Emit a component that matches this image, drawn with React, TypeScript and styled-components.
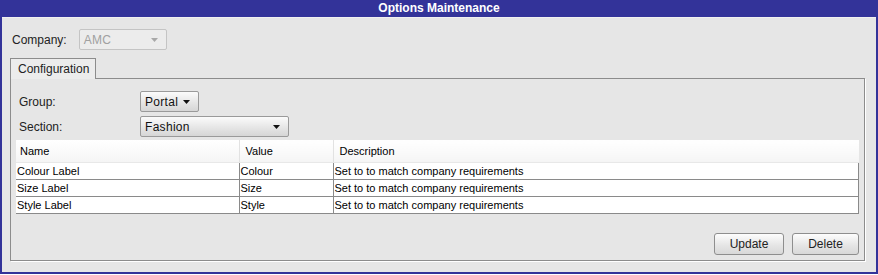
import React from 'react';
import styled, { createGlobalStyle } from 'styled-components';

const GlobalStyle = createGlobalStyle`
  body {
    margin: 0;
    background: #ffffff;
    font-family: 'Liberation Sans', Arial, sans-serif;
  }
`;

interface Row {
  name: string;
  value: string;
  description: string;
}

const rows: Row[] = [
  { name: 'Colour Label', value: 'Colour', description: 'Set to to match company requirements' },
  { name: 'Size Label', value: 'Size', description: 'Set to to match company requirements' },
  { name: 'Style Label', value: 'Style', description: 'Set to to match company requirements' },
];

const Arrow = ({ disabled }: { disabled?: boolean }) => (
  <svg width="7" height="4" viewBox="0 0 7 4">
    <path d="M0 0 L7 0 L3.5 4 Z" fill={disabled ? '#a8a8a8' : '#111'} />
  </svg>
);

const App = () => {
  return (
    <>
      <GlobalStyle />
      <Window>
        <TitleBar>Options Maintenance</TitleBar>
        <Body>
          <CompanyRow>
            <Label>Company:</Label>
            <Select $width={88} $disabled>
              <span>AMC</span>
              <Arrow disabled />
            </Select>
          </CompanyRow>
          <TabStrip>
            <Tab>Configuration</Tab>
          </TabStrip>
          <Panel>
            <FieldRow>
              <FieldLabel>Group:</FieldLabel>
              <Select $width={59}>
                <span>Portal</span>
                <Arrow />
              </Select>
            </FieldRow>
            <FieldRow>
              <FieldLabel>Section:</FieldLabel>
              <Select $width={149}>
                <span>Fashion</span>
                <Arrow />
              </Select>
            </FieldRow>
            <Table>
              <thead>
                <tr>
                  <Th $width={223}>Name</Th>
                  <Th $width={94}>Value</Th>
                  <Th>Description</Th>
                </tr>
              </thead>
              <tbody>
                {rows.map((r) => (
                  <tr key={r.name}>
                    <Td>{r.name}</Td>
                    <Td>{r.value}</Td>
                    <Td>{r.description}</Td>
                  </tr>
                ))}
              </tbody>
            </Table>
            <Actions>
              <Button $width={70}>Update</Button>
              <Button $width={67}>Delete</Button>
            </Actions>
          </Panel>
        </Body>
      </Window>
    </>
  );
};

export default App;

const Window = styled.div`
  width: 878px;
  height: 274px;
  box-sizing: border-box;
  background: #e6e6e6;
  border: 2px solid #333399;
  border-top: none;
  display: flex;
  flex-direction: column;
`;

const TitleBar = styled.div`
  height: 17px;
  margin: 0 -2px;
  background: #333399;
  color: #ffffff;
  font-size: 12px;
  font-weight: bold;
  line-height: 17px;
  text-align: center;
`;

const Body = styled.div`
  flex: 1;
  display: flex;
  flex-direction: column;
  padding: 11px 11px 0 8px;
  border-top: 1px solid #f0f0f0;
`;

const CompanyRow = styled.div`
  display: flex;
  align-items: center;
  gap: 12px;
  padding-left: 2px;
`;

const Label = styled.span`
  font-size: 12px;
  color: #222;
`;

const Select = styled.div<{ $width: number; $disabled?: boolean }>`
  width: ${(p) => p.$width}px;
  height: 21px;
  box-sizing: border-box;
  display: flex;
  align-items: center;
  justify-content: space-between;
  padding: 0 8px 0 4px;
  border: 1px solid ${(p) => (p.$disabled ? '#c4c4c4' : '#9a9a9a')};
  border-radius: 2px;
  background: ${(p) =>
    p.$disabled ? '#ececec' : 'linear-gradient(#fbfbfb, #e4e4e4 60%, #d6d6d6)'};
  color: ${(p) => (p.$disabled ? '#a0a0a0' : '#111')};
  font-size: 12px;
  letter-spacing: 0.3px;
`;

const TabStrip = styled.div`
  display: flex;
  margin-top: 8px;
`;

const Tab = styled.div`
  height: 21px;
  box-sizing: border-box;
  padding: 3px 6px 0 7px;
  border: 1px solid #8c8c8c;
  border-bottom: none;
  background: #ececec;
  font-size: 12px;
  color: #222;
  margin-bottom: -1px;
  position: relative;
  z-index: 1;
`;

const Panel = styled.div`
  height: 183px;
  box-sizing: border-box;
  border: 1px solid #8c8c8c;
  box-shadow: 1px 1px 0 #ffffff;
  padding: 12px 4px 0 5px;
  display: flex;
  flex-direction: column;
`;

const FieldRow = styled.div`
  display: flex;
  align-items: center;
  height: 21px;
  margin-bottom: 4px;
`;

const FieldLabel = styled.span`
  width: 121px;
  padding-left: 3px;
  font-size: 12px;
  color: #222;
`;

const Table = styled.table`
  width: 843px;
  border-collapse: collapse;
  margin-top: -1px;
  font-size: 11px;
  color: #000;
`;

const Th = styled.th<{ $width?: number }>`
  width: ${(p) => (p.$width ? `${p.$width}px` : 'auto')};
  height: 22px;
  box-sizing: border-box;
  padding: 0 6px;
  text-align: left;
  font-weight: normal;
  background: linear-gradient(#ffffff, #f5f5f5);
  border-left: 1px solid #e2e2e2;
  border-bottom: 1px solid #e8e8e8;
  &:first-child {
    border-left: none;
    padding-left: 4px;
  }
`;

const Td = styled.td`
  height: 16px;
  padding: 0 1px;
  background: #ffffff;
  border: 1px solid #8a8a8a;
  border-top: none;
  white-space: nowrap;
  &:first-child {
    border-left: none;
  }
`;

const Actions = styled.div`
  display: flex;
  justify-content: flex-end;
  gap: 8px;
  margin-top: auto;
  margin-bottom: 5px;
  padding-right: 1px;
`;

const Button = styled.button<{ $width: number }>`
  width: ${(p) => p.$width}px;
  height: 22px;
  border: 1px solid #8e8e8e;
  border-radius: 3px;
  background: linear-gradient(#fdfdfd, #e6e6e6 55%, #d8d8d8);
  font-family: 'Liberation Sans', Arial, sans-serif;
  font-size: 12px;
  color: #222;
  padding: 0;
`;
